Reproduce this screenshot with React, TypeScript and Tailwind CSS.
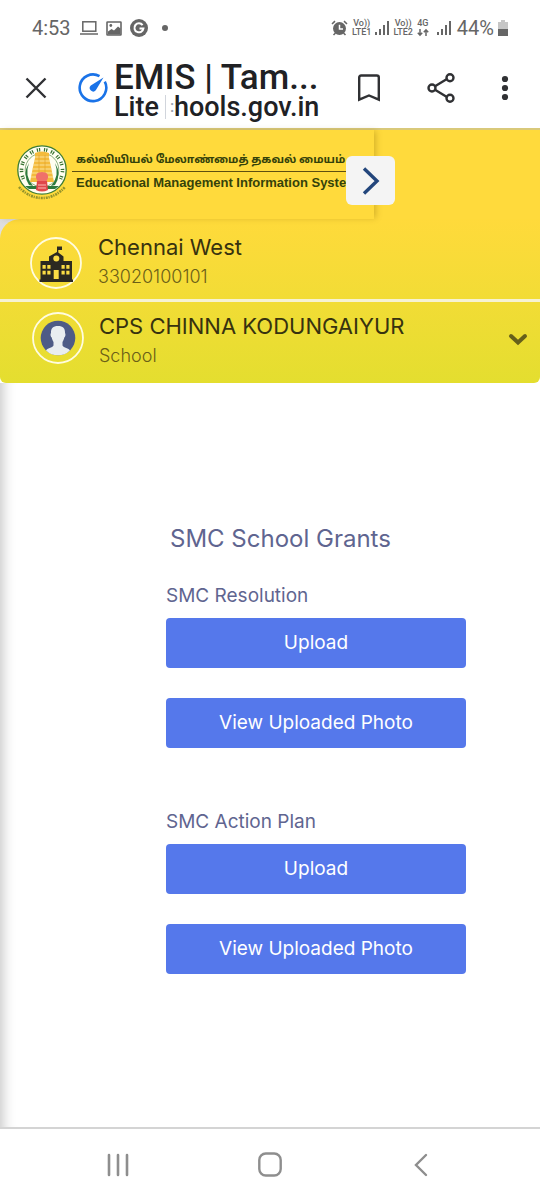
import React from "react";

const sans = "font-['Inter','Noto_Sans',sans-serif]";
const roboto = "font-['Roboto',sans-serif]";

function Signal({ bars }: { bars: number[] }) {
  return (
    <svg width="14" height="16" viewBox="0 0 14 16" fill="#666" aria-hidden="true">
      {bars.map((h, i) => (
        <rect key={i} x={i * 4} y={15 - h} width="2" height={h} />
      ))}
    </svg>
  );
}

function Network({ top, bottom }: { top: string; bottom: string }) {
  return (
    <span className="flex flex-col items-center text-[9px] leading-[9px] font-medium">
      <span>{top}</span>
      <span>{bottom}</span>
    </span>
  );
}

function StatusBar() {
  return (
    <div className={`${roboto} flex h-11 items-start justify-between pt-4 pr-8 pl-8 text-[#666]`}>
      <div className="flex h-6 items-center">
        <span className="w-12 text-[20px] leading-6">4:53</span>
        <svg width="18" height="14" viewBox="0 0 18 14" fill="none" stroke="#666" strokeWidth="1.5" aria-hidden="true">
          <rect x="2.8" y="0.8" width="13" height="9.4" />
          <path d="M0 13H18" />
        </svg>
        <svg className="ml-2" width="16" height="15" viewBox="0 0 16 15" aria-hidden="true">
          <rect x="1" y="1" width="14" height="13" rx="0.5" fill="none" stroke="#666" strokeWidth="1.6" />
          <path d="M2 10.5L5.5 8L8 9.5L12 5.5L14.5 7.5V13.5H2Z" fill="#666" />
          <circle cx="4.8" cy="4.5" r="1.4" fill="#666" />
        </svg>
        <svg className="ml-2" width="18" height="18" viewBox="0 0 18 18" aria-hidden="true">
          <circle cx="9" cy="9" r="9" fill="#666" />
          <path d="M12.6 6.2A4.5 4.5 0 1 0 13.4 9.5H9.5" fill="none" stroke="#fff" strokeWidth="2" />
        </svg>
        <svg className="ml-3.5" width="6" height="6" viewBox="0 0 6 6" aria-hidden="true">
          <circle cx="3" cy="3" r="3" fill="#666" />
        </svg>
      </div>
      <div className="flex h-6 items-center gap-1">
        <svg width="17" height="16" viewBox="0 0 17 16" aria-hidden="true">
          <circle cx="8.5" cy="8.5" r="6.5" fill="#666" />
          <path d="M1 4L4 1.2M16 4L13 1.2M4.5 13L2.5 15M12.5 13L14.5 15" stroke="#666" strokeWidth="1.6" />
          <path d="M8.5 4.8V9H12" fill="none" stroke="#fff" strokeWidth="1.5" />
        </svg>
        <Network top="Vo))" bottom="LTE1" />
        <Signal bars={[3, 6, 10, 14]} />
        <Network top="Vo))" bottom="LTE2" />
        <span className="flex flex-col items-center text-[9px] leading-[9px] font-medium">
          <span>4G</span>
          <svg width="12" height="9" viewBox="0 0 12 9" fill="none" stroke="#666" strokeWidth="1.5" aria-hidden="true">
            <path d="M3 1V7M0.8 4.8L3 7.2L5.2 4.8M9 8V2M6.8 4.2L9 1.8L11.2 4.2" />
          </svg>
        </span>
        <span className="ml-1 flex items-center">
          <Signal bars={[3, 6, 10, 14]} />
        </span>
        <span className="ml-0.5 text-[20px] leading-6">44%</span>
        <svg width="10" height="16" viewBox="0 0 10 16" aria-hidden="true">
          <path d="M3 0H7V2H10V16H0V2H3Z" fill="#c6c6c6" />
          <path d="M0 9H10V16H0Z" fill="#666" />
        </svg>
      </div>
    </div>
  );
}

function BrowserBar() {
  return (
    <div className={`${roboto} flex h-[84px] items-center pt-1 pr-[31px] pl-6 text-[#202124]`}>
      <button type="button" aria-label="Close" className="flex size-6 shrink-0 items-center justify-center">
        <svg width="22" height="22" viewBox="0 0 22 22" stroke="#303134" strokeWidth="2.4" aria-hidden="true">
          <path d="M1.5 1.5L20.5 20.5M20.5 1.5L1.5 20.5" />
        </svg>
      </button>
      <svg className="ml-[30px] shrink-0" width="30" height="30" viewBox="0 0 30 30" aria-hidden="true">
        <path d="M21.5 3.2A13.3 13.3 0 1 0 26.8 8.7" fill="none" stroke="#1a73e8" strokeWidth="2.6" />
        <path d="M25.5 4.5L17.8 17.2A3.4 3.4 0 1 1 12.8 12.6Z" fill="#1a73e8" />
      </svg>
      <div className="ml-1.5 min-w-0 flex-1 pt-2 font-medium whitespace-nowrap">
        <div className="text-[35px] leading-[30px]">EMIS | Tam...</div>
        <div className="flex items-center text-[27px] leading-[28px]">
          <span>Lite</span>
          <span className="ml-1.5 h-6 w-px bg-gray-300" />
          <span className="ml-1 w-1 text-[16px] text-gray-400">:</span>
          <span>hools.gov.in</span>
        </div>
      </div>
      <div className="flex items-center">
        <button type="button" aria-label="Bookmark">
          <svg width="24" height="28" viewBox="0 0 24 28" fill="none" stroke="#303134" strokeWidth="2.4" aria-hidden="true">
            <path d="M2.2 25.7V3.5Q2.2 1.5 4.2 1.5H19.8Q21.8 1.5 21.8 3.5V25.7L12 21.5Z" />
          </svg>
        </button>
        <button type="button" aria-label="Share" className="ml-[46px]">
          <svg width="28" height="30" viewBox="0 0 28 30" fill="none" stroke="#303134" strokeWidth="2.4" aria-hidden="true">
            <path d="M8 13.2L19.5 6.3M8 16.8L19.5 23.7" />
            <circle cx="5" cy="15" r="3.5" />
            <circle cx="23" cy="4.7" r="3.5" />
            <circle cx="23" cy="25.3" r="3.5" />
          </svg>
        </button>
        <button type="button" aria-label="More options" className="ml-[46px]">
          <svg width="8" height="26" viewBox="0 0 8 26" fill="#303134" aria-hidden="true">
            <circle cx="4" cy="4" r="3.1" />
            <circle cx="4" cy="13" r="3.1" />
            <circle cx="4" cy="22" r="3.1" />
          </svg>
        </button>
      </div>
    </div>
  );
}

function Emblem() {
  return (
    <svg className="shrink-0" width="50" height="56" viewBox="0 0 50 56" aria-hidden="true">
      <circle cx="25" cy="25" r="24.2" fill="#fffef0" stroke="#3e7d35" strokeWidth="1.3" />
      <path
        d="M6.5 34A20.5 20.5 0 1 1 43.5 34"
        fill="none"
        stroke="#35702f"
        strokeWidth="3.6"
        strokeDasharray="1.2 1 1.2 3.8"
      />
      <circle cx="25" cy="25" r="16.8" fill="#fffef0" stroke="#568b4b" strokeWidth="0.7" />
      <path d="M12 18Q7 31 16 41L12 40Q5 29 12 18M38 18Q43 31 34 41L38 40Q45 29 38 18" fill="#2c7a3d" />
      <path d="M18 8Q25 5 32 8V13L34 22L37 37H13L16 22L18 13Z" fill="#f4bb3c" />
      <path d="M18 12H32M17 16H33M16 20H34M15.5 24H34.5M15 28H35M14 32H36" stroke="#fbe29a" strokeWidth="1" />
      <path d="M22 10V36M28 10V36" stroke="#e0a42e" strokeWidth="0.7" />
      <path d="M19 33Q18 27 25 27Q32 27 31 33L29 37H21Z" fill="#f0716a" />
      <path d="M8 41H42L38 44H12Z" fill="#2c7a3d" />
      <path d="M20 36H30L31 45Q25 48 19 45Z" fill="#e0474a" />
      <path d="M21 40H29M21 43H29" stroke="#ffc6bd" strokeWidth="0.9" />
      <path d="M2 42Q12 53 25 53Q38 53 48 42" fill="none" stroke="#95932a" strokeWidth="2.6" strokeDasharray="2 0.8 1.2 1" />
    </svg>
  );
}

function SiteHeader() {
  return (
    <header className="relative flex h-[91px] border-t-2 border-[#d9c97a] bg-[#ffda3c]">
      <div className="flex w-[374px] items-start pt-[15px] pl-[17px] shadow-[3px_0_6px_-1px_rgba(120,90,0,0.3)]">
        <Emblem />
        <div className="ml-[5px] pt-1 whitespace-nowrap text-[#34420a]">
          <div className="border-b border-[#5e4f10] pr-3 pl-1 font-['Noto_Sans_Tamil','Noto_Sans','Lohit_Tamil',sans-serif] text-[11px] leading-[22px] font-bold">
            கல்வியியல் மேலாண்மைத் தகவல் மையம்
          </div>
          <div className="pl-1 font-['Liberation_Sans',sans-serif] text-[13px] leading-[22px] font-bold">
            Educational Management Information System
          </div>
        </div>
      </div>
      <button
        type="button"
        aria-label="Open menu"
        className="absolute top-[26px] left-[346px] flex h-[49px] w-[49px] items-center justify-center rounded-md bg-[#f4f4f4]"
      >
        <svg width="18" height="28" viewBox="0 0 18 28" fill="none" stroke="#23467c" strokeWidth="3.4" aria-hidden="true">
          <path d="M2 1.5L15 14L2 26.5" />
        </svg>
      </button>
    </header>
  );
}

function SchoolIcon() {
  return (
    <svg className="shrink-0" width="52" height="52" viewBox="0 0 52 52" aria-hidden="true">
      <circle cx="26" cy="26" r="25" fill="none" stroke="#fffce0" strokeWidth="1.8" />
      <path
        d="M27 9.5H32V13H28.3V15.5L33.5 19.5V24H42V42.5H43V45H9.5V42.5H10.5V24H19V19.5L27 15Z"
        fill="#2c2921"
      />
      <circle cx="26.3" cy="21.5" r="3" fill="#fbdc45" />
      <path
        d="M12.5 28H15.7V31.7H12.5ZM17.3 28H20.5V31.7H17.3ZM31.5 28H34.7V31.7H31.5ZM36.3 28H39.5V31.7H36.3ZM12.5 33.7H15.7V37.5H12.5ZM17.3 33.7H20.5V37.5H17.3ZM31.5 33.7H34.7V37.5H31.5ZM36.3 33.7H39.5V37.5H36.3ZM23.7 33H28.7V42H23.7Z"
        fill="#fbdc45"
      />
    </svg>
  );
}

function PersonIcon() {
  return (
    <svg className="shrink-0" width="52" height="52" viewBox="0 0 52 52" aria-hidden="true">
      <circle cx="26" cy="26" r="25" fill="none" stroke="#fffce0" strokeWidth="1.8" />
      <circle cx="26" cy="26" r="17.3" fill="#4e5b86" />
      <path
        d="M26 14C31 14 33.3 16.5 33 21C34 22 33.3 25 32.3 25.5C31.8 28 31 29 30.5 30V33.5C31.5 36 37 36 38 38.5A17.3 17.3 0 0 1 14 38.5C15 36 20.5 36 21.5 33.5V30C21 29 20.2 28 19.7 25.5C18.7 25 18 22 19 21C18.7 16.5 21 14 26 14Z"
        fill="#e9edf0"
      />
    </svg>
  );
}

function ProfilePanel() {
  return (
    <section className="bg-linear-to-b from-[#dcdcdc] to-white">
      <div className="overflow-hidden rounded-tl-[20px] rounded-b-md bg-linear-to-b from-[#ffda3b] to-[#e4de2f] text-[#37320f]">
        <div className="flex h-[83px] items-center border-b-[3px] border-[#f6f2d2] pt-[7px] pl-[30px]">
          <SchoolIcon />
          <div className="ml-4">
            <div className="text-[22px] leading-7">Chennai West</div>
            <div className="text-[18px] leading-8 font-light text-[#6b5f17]">33020100101</div>
          </div>
        </div>
        <div className="flex h-[81px] items-start pt-[10px] pr-3 pl-8">
          <PersonIcon />
          <div className="ml-[15px] flex-1">
            <div className="text-[22px] leading-7">CPS CHINNA KODUNGAIYUR</div>
            <div className="text-[18px] leading-8 font-light text-[#6b5f17]">School</div>
          </div>
          <button type="button" aria-label="Expand school details" className="mt-[21px]">
            <svg width="20" height="13" viewBox="0 0 20 13" fill="none" stroke="#66601a" strokeWidth="4" strokeLinecap="round" aria-hidden="true">
              <path d="M3 3L10 9.5L17 3" />
            </svg>
          </button>
        </div>
      </div>
    </section>
  );
}

function ActionButton({ children }: { children: string }) {
  return (
    <button type="button" className="flex h-[50px] w-full items-center justify-center rounded bg-[#5578eb] text-[19px] leading-6 text-white">
      {children}
    </button>
  );
}

function UploadGroup({ title }: { title: string }) {
  return (
    <section>
      <h2 className="text-[19px] leading-6 text-[#5f6590]">{title}</h2>
      <div className="mt-[10px] flex flex-col gap-[30px]">
        <ActionButton>Upload</ActionButton>
        <ActionButton>View Uploaded Photo</ActionButton>
      </div>
    </section>
  );
}

function NavBar() {
  return (
    <nav className="flex h-[73px] items-center justify-between border-t-2 border-[#d4d4d4] pr-[107px] pl-[106px] text-[#8e8e8e]">
      <button type="button" aria-label="Recent apps" className="flex w-6 justify-center">
        <svg width="22" height="24" viewBox="0 0 22 24" stroke="currentColor" strokeWidth="2.6" strokeLinecap="round" aria-hidden="true">
          <path d="M2 2V22M11 2V22M20 2V22" />
        </svg>
      </button>
      <button type="button" aria-label="Home" className="flex w-6 justify-center">
        <svg width="24" height="25" viewBox="0 0 24 25" fill="none" stroke="currentColor" strokeWidth="2.4" aria-hidden="true">
          <rect x="1.3" y="1.5" width="21.4" height="22" rx="6.5" />
        </svg>
      </button>
      <button type="button" aria-label="Back" className="flex w-6 justify-center">
        <svg width="14" height="24" viewBox="0 0 14 24" fill="none" stroke="currentColor" strokeWidth="2.4" strokeLinecap="round" aria-hidden="true">
          <path d="M12 2L2 12L12 22" />
        </svg>
      </button>
    </nav>
  );
}

export default function App() {
  return (
    <div className={`${sans} flex min-h-screen flex-col bg-white`}>
      <StatusBar />
      <BrowserBar />
      <SiteHeader />
      <ProfilePanel />
      <main className="flex-1 bg-white pt-[140px] pr-[74px] pl-[166px] shadow-[inset_16px_0_14px_-14px_rgba(0,0,0,0.25)]">
        <h1 className="pl-1 text-[24px] leading-8 text-[#5f6590]">SMC School Grants</h1>
        <div className="mt-[29px] flex flex-col gap-[62px]">
          <UploadGroup title="SMC Resolution" />
          <UploadGroup title="SMC Action Plan" />
        </div>
      </main>
      <NavBar />
    </div>
  );
}
